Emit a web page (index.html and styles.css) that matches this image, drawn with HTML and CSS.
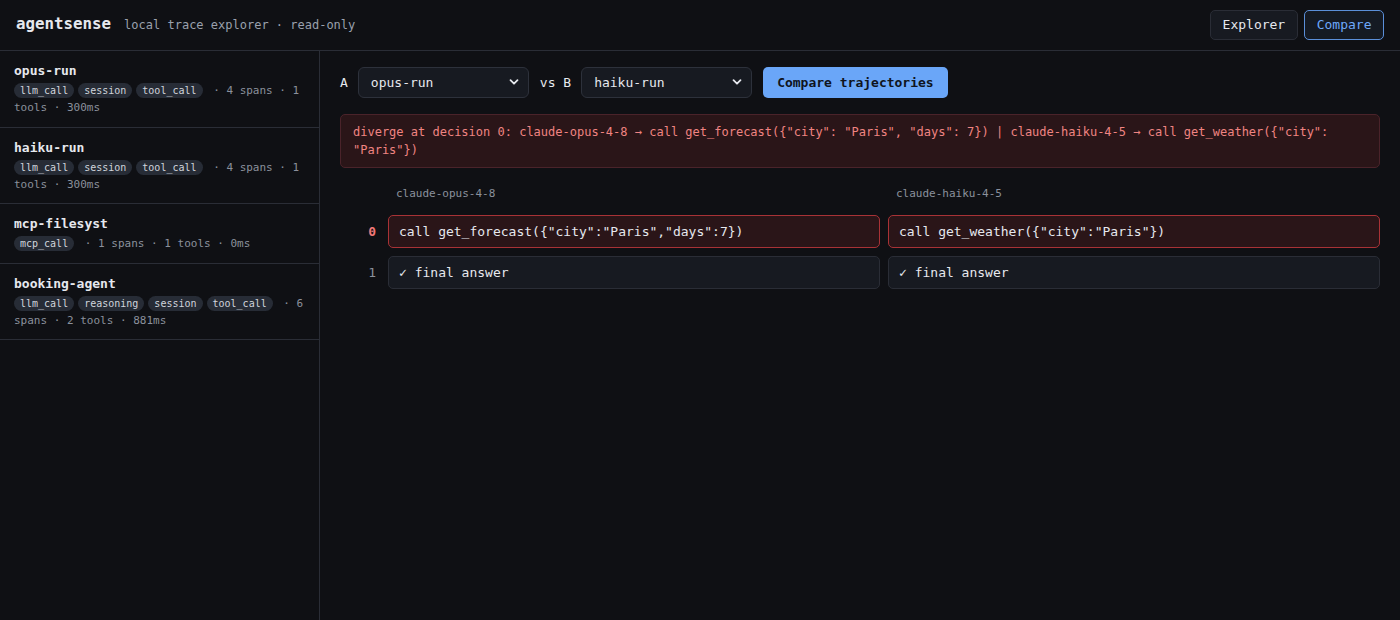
FILE: index.html
```html
<!DOCTYPE html>
<html>
<head>
<meta charset="utf-8">
<link rel="stylesheet" href="styles.css">
</head>
<body>
<header class="topbar">
  <div class="brand">
    <span class="logo">agentsense</span>
    <span class="tagline">local trace explorer · read-only</span>
  </div>
  <nav class="nav">
    <button class="navbtn">Explorer</button>
    <button class="navbtn active">Compare</button>
  </nav>
</header>
<div class="main">
  <aside class="sidebar">
    <div class="trace">
      <div class="trace-name">opus-run</div>
      <div class="trace-meta"><span class="tag">llm_call</span><span class="tag">session</span><span class="tag">tool_call</span> · 4 spans · 1 tools · 300ms</div>
    </div>
    <div class="trace">
      <div class="trace-name">haiku-run</div>
      <div class="trace-meta"><span class="tag">llm_call</span><span class="tag">session</span><span class="tag">tool_call</span> · 4 spans · 1 tools · 300ms</div>
    </div>
    <div class="trace">
      <div class="trace-name">mcp-filesyst</div>
      <div class="trace-meta"><span class="tag">mcp_call</span> · 1 spans · 1 tools · 0ms</div>
    </div>
    <div class="trace">
      <div class="trace-name">booking-agent</div>
      <div class="trace-meta"><span class="tag">llm_call</span><span class="tag">reasoning</span><span class="tag">session</span><span class="tag">tool_call</span> · 6 spans · 2 tools · 881ms</div>
    </div>
  </aside>
  <section class="content">
    <div class="controls">
      <span class="label">A</span>
      <div class="selwrap">
        <select class="sel"><option>opus-run</option></select>
        <svg class="chev" width="10" height="10" viewBox="0 0 10 10"><path d="M1.5 3.2 L5 6.7 L8.5 3.2" fill="none" stroke="#e6e8ee" stroke-width="1.8" stroke-linecap="round" stroke-linejoin="round"/></svg>
      </div>
      <span class="label">vs B</span>
      <div class="selwrap">
        <select class="sel"><option>haiku-run</option></select>
        <svg class="chev" width="10" height="10" viewBox="0 0 10 10"><path d="M1.5 3.2 L5 6.7 L8.5 3.2" fill="none" stroke="#e6e8ee" stroke-width="1.8" stroke-linecap="round" stroke-linejoin="round"/></svg>
      </div>
      <button class="primary">Compare trajectories</button>
    </div>
    <div class="diverge">diverge at decision 0: claude-opus-4-8 → call get_forecast({"city": "Paris", "days": 7}) | claude-haiku-4-5 → call get_weather({"city": "Paris"})</div>
    <div class="grid">
      <div></div>
      <div class="colhead">claude-opus-4-8</div>
      <div class="colhead">claude-haiku-4-5</div>

      <div class="idx bad">0</div>
      <div class="step bad">call get_forecast({"city":"Paris","days":7})</div>
      <div class="step bad">call get_weather({"city":"Paris"})</div>

      <div class="idx">1</div>
      <div class="step">✓ final answer</div>
      <div class="step">✓ final answer</div>
    </div>
  </section>
</div>
</body>
</html>
```

FILE: styles.css
```css
* { box-sizing: border-box; }
html, body {
  margin: 0;
  padding: 0;
  background: #0f1014;
  color: #e6e8ee;
  font-family: "DejaVu Sans Mono", "Liberation Mono", monospace;
  height: 100%;
}
body { display: flex; flex-direction: column; overflow: hidden; }

.topbar {
  height: 51px;
  display: flex;
  align-items: center;
  justify-content: space-between;
  padding: 0 16px 1px 16px;
  border-bottom: 1px solid #2a2d36;
  flex: none;
}
.brand { display: flex; align-items: baseline; gap: 13px; margin-bottom: 3px; }
.logo { font-size: 15.8px; font-weight: bold; color: #e6e8ee; }
.tagline { font-size: 12px; color: #9aa0ad; }

.nav { display: flex; gap: 6px; }
.navbtn {
  font-family: inherit;
  font-size: 13px;
  height: 30px;
  padding: 0 12px;
  background: #171a21;
  color: #e6e8ee;
  border: 1px solid #2a2d36;
  border-radius: 5px;
}
.navbtn.active {
  padding: 0 11.5px;
  border-color: #5b8fd9;
  color: #6ea8fa;
  background: #151a23;
}

.main { flex: 1; display: flex; min-height: 0; }

.sidebar {
  width: 320px;
  flex: none;
  border-right: 1px solid #2a2d36;
}
.trace {
  padding: 12px 14px 10.5px;
  border-bottom: 1px solid #2a2d36;
}
.trace-name {
  font-size: 13px;
  font-weight: bold;
  line-height: 16px;
  margin-bottom: 3px;
  color: #e6e8ee;
}
.trace-meta {
  font-size: 11px;
  line-height: 17px;
  color: #8b909c;
}
.tag {
  font-size: 10px;
  padding: 2px 6px;
  margin-right: 4px;
  background: #272c36;
  color: #d0d4dc;
  border-radius: 8px;
  white-space: nowrap;
}

.content { flex: 1; padding: 16px 20px; min-width: 0; }

.controls { display: flex; align-items: center; margin-bottom: 16px; }
.label { font-size: 13px; color: #e6e8ee; margin-right: 10px; }
.selwrap { position: relative; margin-right: 11px; }
.sel {
  appearance: none;
  -webkit-appearance: none;
  width: 171px;
  height: 31px;
  padding: 0 12px;
  font-family: inherit;
  font-size: 13px;
  color: #e6e8ee;
  background: #171a21;
  border: 1px solid #2d313b;
  border-radius: 6px;
}
.chev { position: absolute; right: 10px; top: 10px; pointer-events: none; }
.primary {
  height: 31px;
  padding: 0 14px;
  font-family: inherit;
  font-size: 13px;
  font-weight: bold;
  background: #6aa6f8;
  color: #0f1420;
  border: none;
  border-radius: 5px;
}

.diverge {
  background: #2a1518;
  border: 1px solid #4a232a;
  border-radius: 5px;
  color: #f08482;
  font-size: 12px;
  line-height: 18px;
  padding: 8px 12px 8px;
  margin-bottom: 18px;
}

.grid {
  display: grid;
  grid-template-columns: 40px 1fr 1fr;
  column-gap: 8px;
  row-gap: 8px;
  align-items: center;
}
.colhead {
  font-size: 11px;
  color: #8b909c;
  padding-left: 8px;
  margin-top: 1px;
  margin-bottom: 7px;
}
.idx {
  text-align: right;
  font-size: 13px;
  color: #8b909c;
  padding-right: 4px;
}
.idx.bad { color: #f07878; font-weight: bold; }
.step {
  font-size: 13px;
  line-height: 17px;
  padding: 7px 10px;
  background: #171a21;
  border: 1px solid #2a2d36;
  border-radius: 5px;
  color: #e6e8ee;
}
.step.bad {
  background: #2a1518;
  border-color: #a83236;
}
```
